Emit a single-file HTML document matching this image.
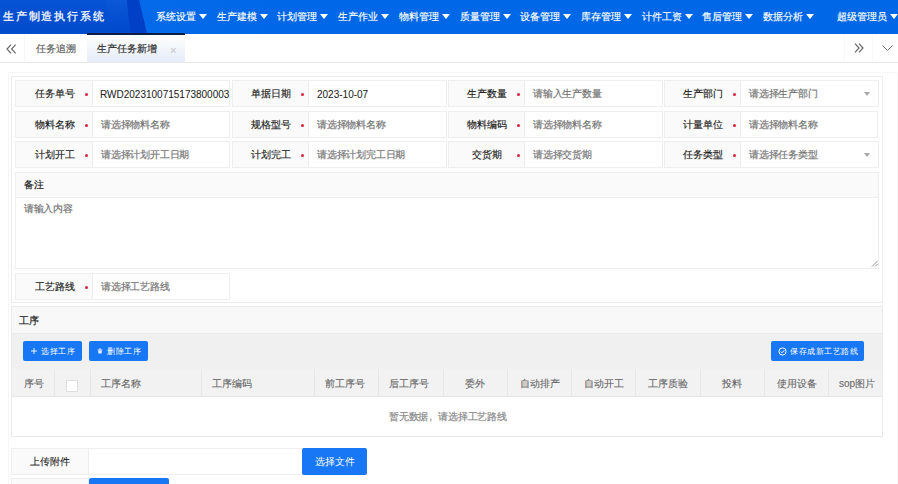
<!DOCTYPE html>
<html><head><meta charset="utf-8">
<style>
*{box-sizing:border-box;margin:0;padding:0}
html,body{width:898px;height:484px;overflow:hidden;background:#fff;font-family:"Liberation Sans",sans-serif;font-size:10px;color:#333;-webkit-text-stroke-width:0.2px}
.a{position:absolute}
#hdr{left:0;top:0;width:898px;height:34px;background:#1a6ff2;overflow:hidden}
.nav{position:absolute;top:11px;color:#fff;font-size:10px;line-height:12px;white-space:nowrap;-webkit-text-stroke-width:0.15px}
.tri{display:inline-block;width:0;height:0;border-left:4.5px solid transparent;border-right:4.5px solid transparent;border-top:5px solid #fff;margin-left:3px;vertical-align:1px}
.lab{position:absolute;background:#fafafa;border:1px solid #eee;height:27px;-webkit-text-stroke-width:0.15px;color:#1a1a1a;line-height:25px;text-align:center}
.inp{position:absolute;background:#fff;border:1px solid #eee;height:27px;line-height:25px;padding-left:8px;color:#777;white-space:nowrap;overflow:hidden;letter-spacing:-0.2px}
.star{position:absolute;width:3px;height:3px;border-radius:1.5px;background:#d9213f}
.th{position:absolute;top:377px;line-height:14px;color:#666;white-space:nowrap;-webkit-text-stroke-width:0.1px}
.vl{position:absolute;top:369px;width:1px;height:28px;background:#e6e6e6}
.btn{position:absolute;background:#1877f4;border-radius:2px;color:#fff;white-space:nowrap}
.bt{color:#fff;font-size:8px;letter-spacing:0.55px;line-height:12px;white-space:nowrap;-webkit-text-stroke-width:0}
.sel{position:absolute;width:0;height:0;border-left:3.5px solid transparent;border-right:3.5px solid transparent;border-top:4px solid #a8a8a8}
</style></head><body>

<!-- header -->
<div id="hdr" class="a">
<svg class="a" style="left:0;top:0" width="898" height="34">
<defs>
<linearGradient id="g1" x1="0" y1="0" x2="0" y2="1"><stop offset="0" stop-color="#0652d4"/><stop offset="1" stop-color="#004ccc"/></linearGradient>
<linearGradient id="g2" x1="0" y1="0" x2="1" y2="0"><stop offset="0" stop-color="#0a6cec"/><stop offset="0.3" stop-color="#0068e8"/><stop offset="1" stop-color="#0068e6"/></linearGradient>
<linearGradient id="g3" x1="0" y1="0" x2="0" y2="1"><stop offset="0" stop-color="#0a58d8"/><stop offset="1" stop-color="#0048cc"/></linearGradient>
</defs>
<rect x="0" y="0" width="898" height="34" fill="url(#g2)"/>
<polygon points="0,0 139,0 147,34 0,34" fill="url(#g1)"/>
<path d="M106,0 L127,0 Q128,18 131,34 L112,34 Q108,16 106,0Z" fill="url(#g3)"/>
<path d="M127,0 L139,0 L147,34 L131,34 Q128,18 127,0Z" fill="#0040c6"/>
</svg>
<div class="a" style="left:3px;top:9px;color:#fff;font-size:11px;letter-spacing:1.8px;line-height:14px;white-space:nowrap;-webkit-text-stroke-width:0.25px">生产制造执行系统</div>
<div class="nav" style="left:156px">系统设置<i class="tri"></i></div>
<div class="nav" style="left:217px">生产建模<i class="tri"></i></div>
<div class="nav" style="left:277px">计划管理<i class="tri"></i></div>
<div class="nav" style="left:338px">生产作业<i class="tri"></i></div>
<div class="nav" style="left:399px">物料管理<i class="tri"></i></div>
<div class="nav" style="left:460px">质量管理<i class="tri"></i></div>
<div class="nav" style="left:520px">设备管理<i class="tri"></i></div>
<div class="nav" style="left:581px">库存管理<i class="tri"></i></div>
<div class="nav" style="left:642px">计件工资<i class="tri"></i></div>
<div class="nav" style="left:702px">售后管理<i class="tri"></i></div>
<div class="nav" style="left:763px">数据分析<i class="tri"></i></div>
<div class="nav" style="left:837px">超级管理员<i class="tri"></i></div>
</div>

<!-- tab bar -->
<div class="a" style="left:0;top:34px;width:898px;height:29px;background:#fff;border-bottom:1px solid #e8e8e8"></div>
<svg class="a" style="left:6px;top:44px" width="11" height="10" viewBox="0 0 11 10"><path d="M5 0.6 L1 5 L5 9.4 M9.6 0.6 L5.6 5 L9.6 9.4" fill="none" stroke="#666" stroke-width="1.15"/></svg>
<div class="a" style="left:24px;top:34px;width:1px;height:28px;background:#f6f6f6"></div>
<div class="a" style="left:36px;top:43px;color:#666;line-height:12px;font-size:10px">任务追溯</div>
<div class="a" style="left:87px;top:33px;width:98px;height:29px;background:linear-gradient(#fff,#e5ecf8);border-top:2px solid #0b1f45"></div>
<div class="a" style="left:97px;top:43px;color:#333;line-height:12px;font-size:10px">生产任务新增</div>
<div class="a" style="left:170px;top:44px;color:#c8c8c8;line-height:12px;font-size:11px">×</div>
<div class="a" style="left:844px;top:34px;width:1px;height:28px;background:#f8f8f8"></div>
<div class="a" style="left:872px;top:34px;width:1px;height:28px;background:#f8f8f8"></div>
<svg class="a" style="left:854px;top:43px" width="10" height="10" viewBox="0 0 10 10"><path d="M1 0.6 L5 5 L1 9.4 M5 0.6 L9 5 L5 9.4" fill="none" stroke="#666" stroke-width="1.2"/></svg>
<svg class="a" style="left:882px;top:45px" width="11" height="6" viewBox="0 0 11 6"><path d="M0.5 0.5 L5.5 5.5 L10.5 0.5" fill="none" stroke="#777" stroke-width="1"/></svg>

<!-- content bg -->
<div class="a" style="left:0;top:63px;width:898px;height:421px;background:#fff"></div>
<div class="a" style="left:8px;top:72px;width:890px;height:420px;border:1px solid #f6f6f6"></div>
<div class="a" style="left:11px;top:76px;width:872px;height:227px;border:1px solid #ececec"></div>

<!-- row 1 -->
<div class="lab" style="left:15px;top:80px;width:78px;padding-left:1px">任务单号</div><i class="star" style="left:85px;top:93px"></i>
<div class="inp" style="left:92px;top:80px;width:138px;color:#333;font-size:10px;padding-left:7px"><span style="position:relative;top:1px;letter-spacing:0;-webkit-text-stroke-width:0.05px;color:#222">RWD2023100715173800003</span></div>
<div class="lab" style="left:232px;top:80px;width:77px;padding-left:1px">单据日期</div><i class="star" style="left:301px;top:93px"></i>
<div class="inp" style="left:308px;top:80px;width:139px;color:#333;font-size:10px;padding-left:8px"><span style="position:relative;top:1px;letter-spacing:0;-webkit-text-stroke-width:0.05px;color:#222">2023-10-07</span></div>
<div class="lab" style="left:448px;top:80px;width:77px;padding-left:1px">生产数量</div><i class="star" style="left:517px;top:93px"></i>
<div class="inp" style="left:524px;top:80px;width:139px">请输入生产数量</div>
<div class="lab" style="left:664px;top:80px;width:77px;padding-left:1px">生产部门</div><i class="star" style="left:733px;top:93px"></i>
<div class="inp" style="left:740px;top:80px;width:139px">请选择生产部门</div><i class="sel" style="left:864px;top:92px"></i>

<!-- row 2 -->
<div class="lab" style="left:15px;top:111px;width:78px;padding-left:1px">物料名称</div><i class="star" style="left:85px;top:124px"></i>
<div class="inp" style="left:92px;top:111px;width:138px">请选择物料名称</div>
<div class="lab" style="left:232px;top:111px;width:77px;padding-left:1px">规格型号</div><i class="star" style="left:301px;top:124px"></i>
<div class="inp" style="left:308px;top:111px;width:139px">请选择物料名称</div>
<div class="lab" style="left:448px;top:111px;width:77px;padding-left:1px">物料编码</div><i class="star" style="left:517px;top:124px"></i>
<div class="inp" style="left:524px;top:111px;width:139px">请选择物料名称</div>
<div class="lab" style="left:664px;top:111px;width:77px;padding-left:1px">计量单位</div><i class="star" style="left:733px;top:124px"></i>
<div class="inp" style="left:740px;top:111px;width:138px">请选择物料名称</div>

<!-- row 3 -->
<div class="lab" style="left:15px;top:141px;width:78px;padding-left:1px">计划开工</div><i class="star" style="left:85px;top:154px"></i>
<div class="inp" style="left:92px;top:141px;width:138px">请选择计划开工日期</div>
<div class="lab" style="left:232px;top:141px;width:77px;padding-left:1px">计划完工</div><i class="star" style="left:301px;top:154px"></i>
<div class="inp" style="left:308px;top:141px;width:139px">请选择计划完工日期</div>
<div class="lab" style="left:448px;top:141px;width:77px;padding-left:1px">交货期</div><i class="star" style="left:517px;top:154px"></i>
<div class="inp" style="left:524px;top:141px;width:139px">请选择交货期</div>
<div class="lab" style="left:664px;top:141px;width:77px;padding-left:1px">任务类型</div><i class="star" style="left:733px;top:154px"></i>
<div class="inp" style="left:740px;top:141px;width:139px">请选择任务类型</div><i class="sel" style="left:864px;top:153px"></i>

<!-- remark -->
<div class="a" style="left:15px;top:172px;width:864px;height:97px;border:1px solid #eee;background:#fff"></div>
<div class="a" style="left:16px;top:173px;width:862px;height:25px;background:#fafafa;border-bottom:1px solid #eee"></div>
<div class="a" style="left:24px;top:179px;-webkit-text-stroke-width:0.2px;color:#222;line-height:12px">备注</div>
<div class="a" style="left:24px;top:203px;color:#777;line-height:12px;letter-spacing:-0.3px">请输入内容</div>
<svg class="a" style="left:871px;top:260px" width="7" height="7" viewBox="0 0 7 7"><path d="M1 6.5 L6.5 1 M4 6.5 L6.5 4" stroke="#888" stroke-width="0.9"/></svg>

<!-- route row -->
<div class="lab" style="left:15px;top:273px;width:78px;padding-left:1px">工艺路线</div><i class="star" style="left:85px;top:286px"></i>
<div class="inp" style="left:92px;top:273px;width:138px">请选择工艺路线</div>

<!-- process panel -->
<div class="a" style="left:11px;top:306px;width:872px;height:131px;border:1px solid #eaeaea;background:#fff"></div>
<div class="a" style="left:12px;top:307px;width:870px;height:27px;background:#f8f8f8;border-bottom:1px solid #eaeaea"></div>
<div class="a" style="left:19px;top:315px;line-height:12px;color:#222;-webkit-text-stroke-width:0.2px">工序</div>
<div class="a" style="left:12px;top:334px;width:870px;height:35px;background:#f0f0f0"></div>
<div class="btn" style="left:23px;top:341px;width:59px;height:20px"></div>
<svg class="a" style="left:31px;top:348px" width="6" height="6" viewBox="0 0 6 6"><path d="M3 0V6M0 3H6" stroke="#fff" stroke-width="0.9"/></svg>
<div class="a bt" style="left:41px;top:346px">选择工序</div>
<div class="btn" style="left:89px;top:341px;width:59px;height:20px"></div>
<svg class="a" style="left:97px;top:348px" width="6" height="6" viewBox="0 0 6 6"><path d="M2 1.3V0.5H4V1.3M0.5 1.6H5.5V2.2H0.5Z M1.1 2.6H4.9L4.6 5.6H1.4Z" fill="#e8f0ff"/></svg>
<div class="a bt" style="left:107px;top:346px">删除工序</div>
<div class="btn" style="left:771px;top:341px;width:93px;height:20px"></div>
<svg class="a" style="left:778px;top:347px" width="9" height="9" viewBox="0 0 9 9"><circle cx="4.5" cy="4.5" r="3.6" fill="none" stroke="#fff" stroke-width="1"/><path d="M2.8 4.6L4 5.8L6.3 3.3" fill="none" stroke="#fff" stroke-width="1"/></svg>
<div class="a bt" style="left:790px;top:346px">保存成新工艺路线</div>
<div class="a" style="left:12px;top:369px;width:870px;height:28px;background:#f2f2f2;border-bottom:1px solid #e6e6e6"></div>
<div class="vl" style="left:54px"></div><div class="vl" style="left:90px"></div><div class="vl" style="left:201px"></div><div class="vl" style="left:314px"></div><div class="vl" style="left:378px"></div><div class="vl" style="left:443px"></div><div class="vl" style="left:507px"></div><div class="vl" style="left:571px"></div><div class="vl" style="left:635px"></div><div class="vl" style="left:700px"></div><div class="vl" style="left:764px"></div><div class="vl" style="left:828px"></div>
<div class="th" style="left:24px">序号</div>
<div class="a" style="left:66px;top:380px;width:12px;height:12px;background:#fff;border:1px solid #dedede"></div>
<div class="th" style="left:101px">工序名称</div>
<div class="th" style="left:212px">工序编码</div>
<div class="th" style="left:325px">前工序号</div>
<div class="th" style="left:389px">后工序号</div>
<div class="th" style="left:465px">委外</div>
<div class="th" style="left:520px">自动排产</div>
<div class="th" style="left:584px">自动开工</div>
<div class="th" style="left:648px">工序质验</div>
<div class="th" style="left:722px">投料</div>
<div class="th" style="left:777px">使用设备</div>
<div class="th" style="left:839px">sop图片</div>
<div class="a" style="left:389px;top:411px;line-height:12px;color:#8a8a8a;letter-spacing:-0.2px;white-space:nowrap">暂无数据<span style="display:inline-block;width:10px;text-indent:1px">,</span>请选择工艺路线</div>

<!-- upload -->
<div class="a" style="left:11px;top:448px;width:78px;height:27px;background:#fafafa;border:1px solid #eee;text-align:center;line-height:25px;color:#222;-webkit-text-stroke-width:0.1px">上传附件</div>
<div class="a" style="left:88px;top:448px;width:215px;height:27px;background:#fff;border:1px solid #eee"></div>
<div class="btn" style="left:302px;top:448px;width:65px;height:27px;line-height:27px;text-align:center;font-size:10px;-webkit-text-stroke-width:0">选择文件</div>
<div class="a" style="left:11px;top:478px;width:78px;height:27px;background:#fafafa;border:1px solid #eee"></div>
<div class="btn" style="left:89px;top:478px;width:80px;height:27px"></div>

</body></html>
